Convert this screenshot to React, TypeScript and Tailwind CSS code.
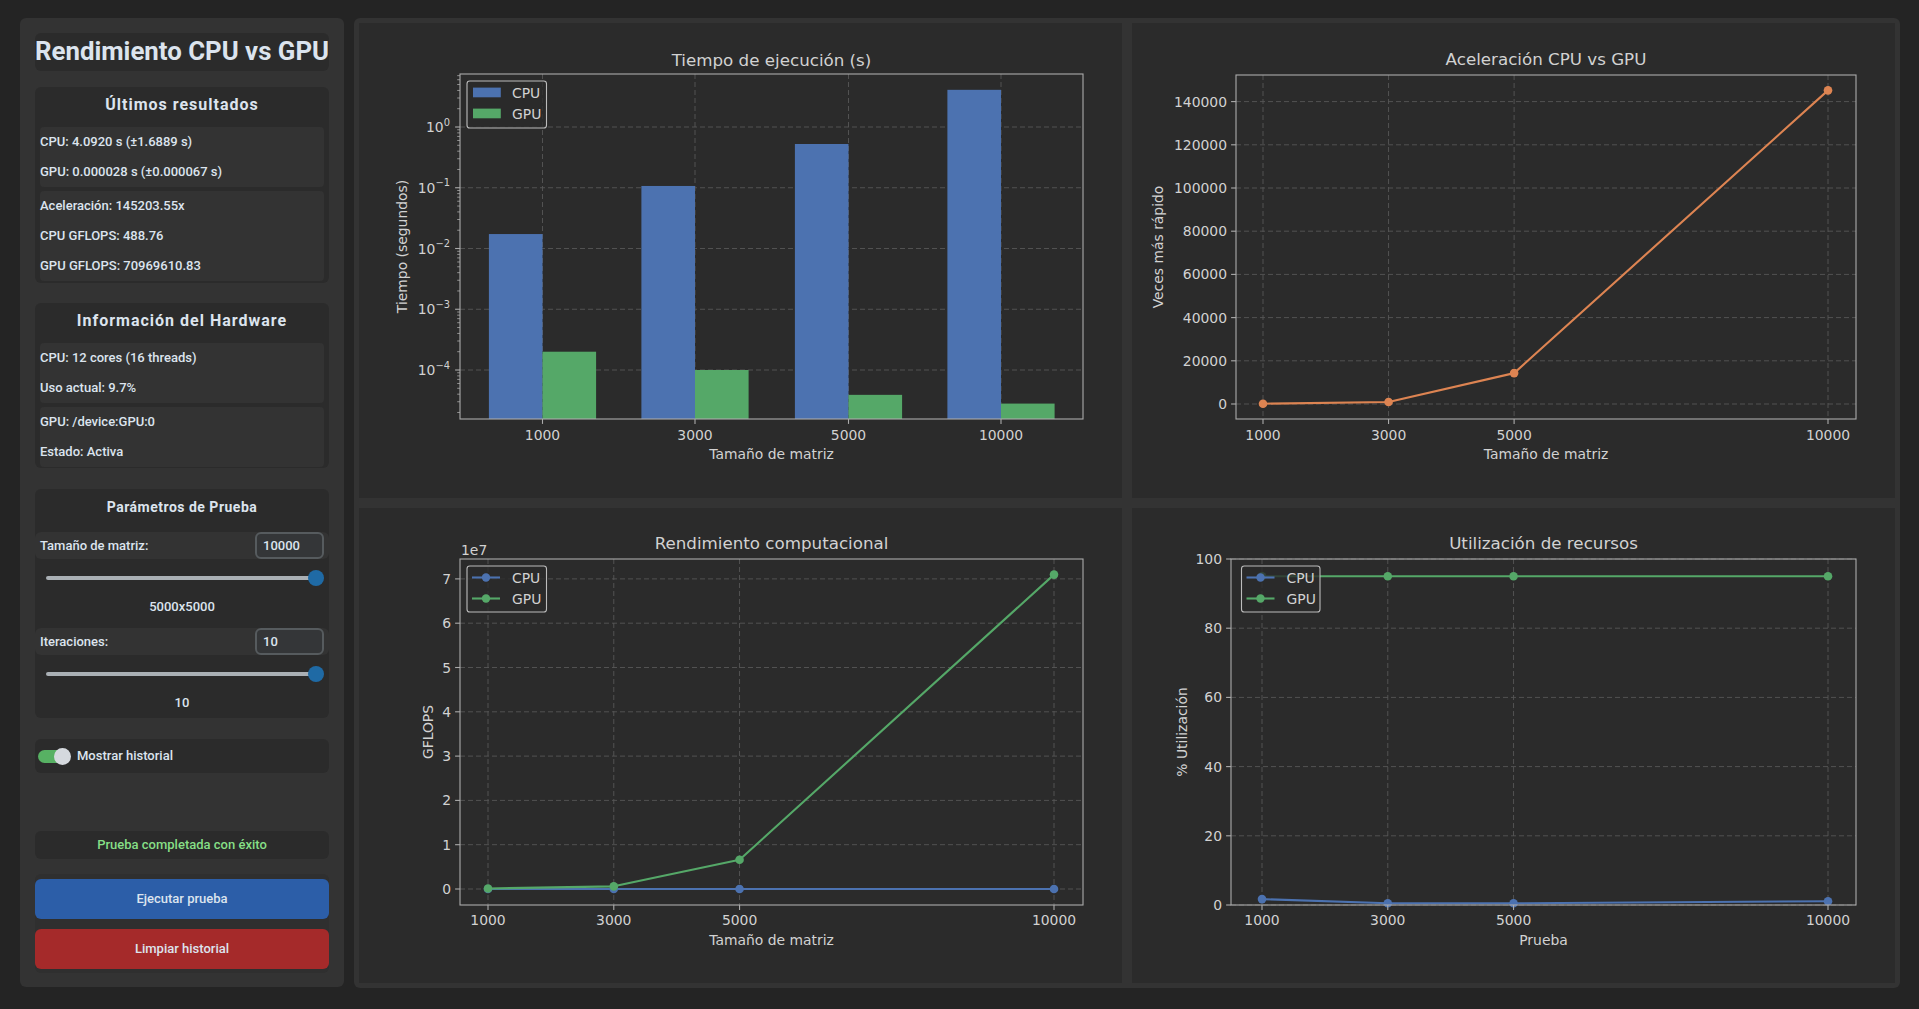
import React from 'react';

const FONT = "'DejaVu Sans', 'Liberation Sans', sans-serif";
const FG = '#d2d2d2';
const SPINE = '#ababab';
const GRID = '#575757';
const BLUE = '#4c72b0';
const GREEN = '#55a868';
const ORANGE = '#dd8452';

type Axes = { l: number; r: number; t: number; b: number };
type Item = { label: string; color: string };

const SIZES = [1000, 3000, 5000, 10000];
const lin = (p0: number, p1: number) => (v: number) => p0 + ((v - 1000) * (p1 - p0)) / 9000;

function Frame({ children }: { children: React.ReactNode }) {
  return (
    <div className="bg-[#2b2b2b] overflow-hidden">
      <svg viewBox="0 0 763 475" className="block w-full h-full" fontFamily={FONT}>
        {children}
      </svg>
    </div>
  );
}

function Grid({ a, xs, ys }: { a: Axes; xs: number[]; ys: number[] }) {
  return (
    <g stroke={GRID} strokeWidth={0.9} strokeDasharray="5 3">
      {ys.map((y) => (
        <line key={'h' + y} x1={a.l} x2={a.r} y1={y} y2={y} />
      ))}
      {xs.map((x) => (
        <line key={'v' + x} x1={x} x2={x} y1={a.t} y2={a.b} />
      ))}
    </g>
  );
}

function Spines({ a, xs, ys }: { a: Axes; xs: number[]; ys: number[] }) {
  return (
    <g stroke={SPINE} strokeWidth={1.1}>
      <rect x={a.l} y={a.t} width={a.r - a.l} height={a.b - a.t} fill="none" />
      {ys.map((y) => (
        <line key={'yt' + y} x1={a.l - 4.9} x2={a.l} y1={y} y2={y} />
      ))}
      {xs.map((x) => (
        <line key={'xt' + x} x1={x} x2={x} y1={a.b} y2={a.b + 4.9} />
      ))}
    </g>
  );
}

function XLabels({ xs, labels, y = 417 }: { xs: number[]; labels: string[]; y?: number }) {
  return (
    <g fontSize={13.9} fill={FG} textAnchor="middle">
      {xs.map((x, i) => (
        <text key={i} x={x} y={y}>
          {labels[i]}
        </text>
      ))}
    </g>
  );
}

function YLabels({ a, ys, labels }: { a: Axes; ys: number[]; labels: string[] }) {
  return (
    <g fontSize={13.9} fill={FG} textAnchor="end">
      {ys.map((y, i) => (
        <text key={i} x={a.l - 9} y={y + 5}>
          {labels[i]}
        </text>
      ))}
    </g>
  );
}

function Titles({ a, title, xlabel, ylabel, yx, ty }: { a: Axes; title: string; xlabel: string; ylabel: string; yx: number; ty: number }) {
  const cx = (a.l + a.r) / 2;
  const cy = (a.t + a.b) / 2;
  return (
    <g fill={FG}>
      <text x={cx} y={ty} fontSize={16.7} textAnchor="middle">
        {title}
      </text>
      <text x={cx} y={a.b + 40} fontSize={13.9} textAnchor="middle">
        {xlabel}
      </text>
      <text transform={`translate(${yx},${cy}) rotate(-90)`} fontSize={13.9} textAnchor="middle" dominantBaseline="central">
        {ylabel}
      </text>
    </g>
  );
}

function Legend({ x, y, w, h, kind, items }: { x: number; y: number; w: number; h: number; kind: 'bar' | 'line'; items: Item[] }) {
  return (
    <g>
      <rect x={x} y={y} width={w} height={h} rx={2.8} fill="#2b2b2b" fillOpacity={0.8} stroke="#bcbcbc" strokeWidth={1.1} />
      {items.map((it, i) => {
        const cy = y + 11.5 + i * 21;
        return (
          <g key={it.label}>
            {kind === 'bar' ? (
              <rect x={x + 6} y={cy - 4.9} width={27.8} height={9.7} fill={it.color} />
            ) : (
              <>
                <line x1={x + 5} x2={x + 33} y1={cy} y2={cy} stroke={it.color} strokeWidth={2.1} />
                <circle cx={x + 19} cy={cy} r={4.2} fill={it.color} />
              </>
            )}
            <text x={x + 45} y={cy + 5} fontSize={13.9} fill={FG}>
              {it.label}
            </text>
          </g>
        );
      })}
    </g>
  );
}

function Series({ pts, color }: { pts: [number, number][]; color: string }) {
  return (
    <g>
      <polyline points={pts.map((p) => p.join(',')).join(' ')} fill="none" stroke={color} strokeWidth={2.1} strokeLinejoin="round" />
      {pts.map(([x, y], i) => (
        <circle key={i} cx={x} cy={y} r={4.3} fill={color} />
      ))}
    </g>
  );
}

const CPU_GPU: Item[] = [
  { label: 'CPU', color: BLUE },
  { label: 'GPU', color: GREEN },
];

function TimeChart() {
  const a: Axes = { l: 101, r: 724, t: 51, b: 396 };
  const yLog = (v: number) => 104 - Math.log10(v) * 60.75;
  const centers = [183.5, 336, 489.5, 642];
  const cpu = [0.0173, 0.107, 0.525, 4.092];
  const gpu = [0.0002, 0.0001, 0.000039, 0.000028];
  const exps = [0, -1, -2, -3, -4];
  const majors = exps.map((e) => yLog(Math.pow(10, e)));
  const minors: number[] = [];
  for (let d = -5; d <= 0; d++) {
    for (let k = 2; k <= 9; k++) {
      const y = yLog(k * Math.pow(10, d));
      if (y >= a.t && y <= a.b) minors.push(y);
    }
  }
  const w = 53.6;
  return (
    <Frame>
      <Grid a={a} xs={centers} ys={majors} />
      {centers.map((c, i) => (
        <g key={i}>
          <rect x={c - w} y={yLog(cpu[i])} width={w} height={a.b - yLog(cpu[i])} fill={BLUE} />
          <rect x={c} y={yLog(gpu[i])} width={w} height={a.b - yLog(gpu[i])} fill={GREEN} />
        </g>
      ))}
      <Spines a={a} xs={centers} ys={majors} />
      <g stroke={SPINE} strokeWidth={0.8}>
        {minors.map((y, i) => (
          <line key={i} x1={a.l - 2.8} x2={a.l} y1={y} y2={y} />
        ))}
      </g>
      <g fill={FG} textAnchor="end">
        {exps.map((e, i) => (
          <text key={e} x={a.l - 10} y={majors[i] + 5} fontSize={13.9}>
            10
            <tspan dy={-6.5} fontSize={9.9}>
              {e === 0 ? '0' : '\u2212' + Math.abs(e)}
            </tspan>
          </text>
        ))}
      </g>
      <XLabels xs={centers} labels={['1000', '3000', '5000', '10000']} />
      <Legend x={108} y={58} w={79.5} h={47} kind="bar" items={CPU_GPU} />
      <Titles a={a} title="Tiempo de ejecución (s)" xlabel="Tamaño de matriz" ylabel="Tiempo (segundos)" yx={43} ty={42.5} />
    </Frame>
  );
}

function SpeedupChart() {
  const a: Axes = { l: 104, r: 724, t: 52, b: 396 };
  const X = lin(131, 696);
  const Y = (v: number) => 381 - (v / 20000) * 43.2;
  const ticks = [0, 20000, 40000, 60000, 80000, 100000, 120000, 140000];
  const xs = SIZES.map(X);
  const ys = ticks.map(Y);
  const data = [150, 950, 14300, 145203.55];
  return (
    <Frame>
      <Grid a={a} xs={xs} ys={ys} />
      <Series pts={SIZES.map((s, i) => [X(s), Y(data[i])])} color={ORANGE} />
      <Spines a={a} xs={xs} ys={ys} />
      <YLabels a={a} ys={ys} labels={ticks.map(String)} />
      <XLabels xs={xs} labels={SIZES.map(String)} />
      <Titles a={a} title="Aceleración CPU vs GPU" xlabel="Tamaño de matriz" ylabel="Veces más rápido" yx={26} ty={42} />
    </Frame>
  );
}

function GflopsChart() {
  const a: Axes = { l: 101, r: 724, t: 51, b: 397 };
  const X = lin(129, 695);
  const Y = (v: number) => 381 - v * 44.3;
  const ticks = [0, 1, 2, 3, 4, 5, 6, 7];
  const xs = SIZES.map(X);
  const ys = ticks.map(Y);
  const gpu = [0.012, 0.06, 0.66, 7.097];
  const cpu = [0.00002, 0.00004, 0.00004, 0.00005];
  return (
    <Frame>
      <Grid a={a} xs={xs} ys={ys} />
      <Series pts={SIZES.map((s, i) => [X(s), Y(cpu[i])])} color={BLUE} />
      <Series pts={SIZES.map((s, i) => [X(s), Y(gpu[i])])} color={GREEN} />
      <Spines a={a} xs={xs} ys={ys} />
      <YLabels a={a} ys={ys} labels={ticks.map(String)} />
      <XLabels xs={xs} labels={SIZES.map(String)} />
      <text x={102} y={47} fontSize={13.9} fill={FG}>
        1e7
      </text>
      <Legend x={108} y={58} w={79.5} h={46} kind="line" items={CPU_GPU} />
      <Titles a={a} title="Rendimiento computacional" xlabel="Tamaño de matriz" ylabel="GFLOPS" yx={69} ty={40.5} />
    </Frame>
  );
}

function UsageChart() {
  const a: Axes = { l: 99, r: 724, t: 51, b: 397 };
  const X = lin(130, 696);
  const Y = (v: number) => 397 - v * 3.46;
  const ticks = [0, 20, 40, 60, 80, 100];
  const xs = SIZES.map(X);
  const ys = ticks.map(Y);
  const gpu = [95, 95, 95, 95];
  const cpu = [1.7, 0.5, 0.5, 1.1];
  return (
    <Frame>
      <Grid a={a} xs={xs} ys={ys} />
      <Series pts={SIZES.map((s, i) => [X(s), Y(cpu[i])])} color={BLUE} />
      <Series pts={SIZES.map((s, i) => [X(s), Y(gpu[i])])} color={GREEN} />
      <Spines a={a} xs={xs} ys={ys} />
      <YLabels a={a} ys={ys} labels={ticks.map(String)} />
      <XLabels xs={xs} labels={SIZES.map(String)} />
      <Legend x={109.5} y={58} w={78.5} h={46} kind="line" items={CPU_GPU} />
      <Titles a={a} title="Utilización de recursos" xlabel="Prueba" ylabel="% Utilización" yx={50} ty={41} />
    </Frame>
  );
}

function Row({ children }: { children: React.ReactNode }) {
  return <div className="h-[30px] flex items-center text-[13px] font-medium">{children}</div>;
}

function Block({ lines }: { lines: string[] }) {
  return (
    <div className="mt-1 bg-[#333333] rounded-[4px]">
      {lines.map((l) => (
        <Row key={l}>{l}</Row>
      ))}
    </div>
  );
}

function Param({ label, value, shown }: { label: string; value: string; shown: string }) {
  return (
    <>
      <div className="h-[27px] bg-[#333333] rounded-[6px] flex items-center justify-between pl-[5px] pr-[5px]">
        <span className="text-[13px] font-medium">{label}</span>
        <input
          readOnly
          defaultValue={value}
          className="w-[69px] h-[27px] bg-[#343638] border-2 border-[#565b5e] rounded-[6px] pl-[6px] text-[13px] font-medium text-[#dce4ee] outline-none"
        />
      </div>
      <div className="h-[38px] flex items-center ml-[11px] mr-[5px]">
        <div className="relative w-full h-4 flex items-center">
          <div className="w-[calc(100%-8px)] h-[4px] rounded-full bg-[#aab0b5]" />
          <div className="absolute right-0 top-0 w-4 h-4 rounded-full bg-[#1f6aa5]" />
        </div>
      </div>
      <div className="h-[18px] pt-[2px] flex items-center justify-center text-[13px] font-medium">{shown}</div>
    </>
  );
}

function Sidebar() {
  return (
    <div className="w-[324px] h-[969px] shrink-0 bg-[#333333] rounded-[6px] px-[15px] pt-[15px] flex flex-col">
      <div className="h-[38px] rounded-[6px] bg-[#2b2b2b] flex items-center justify-center">
        <h1 className="text-[25.8px] font-bold whitespace-nowrap leading-none">Rendimiento CPU vs GPU</h1>
      </div>

      <div className="mt-4 rounded-[6px] bg-[#2b2b2b] px-[5px] pb-[2px]">
        <div className="h-[36px] flex items-center justify-center text-[16px] font-bold tracking-[1px]">Últimos resultados</div>
        <Block lines={['CPU: 4.0920 s (±1.6889 s)', 'GPU: 0.000028 s (±0.000067 s)']} />
        <Block lines={['Aceleración: 145203.55x', 'CPU GFLOPS: 488.76', 'GPU GFLOPS: 70969610.83']} />
      </div>

      <div className="mt-5 rounded-[6px] bg-[#2b2b2b] px-[5px] pb-[1px]">
        <div className="h-[36px] flex items-center justify-center text-[16px] font-bold tracking-[1px]">Información del Hardware</div>
        <Block lines={['CPU: 12 cores (16 threads)', 'Uso actual: 9.7%']} />
        <Block lines={['GPU: /device:GPU:0', 'Estado: Activa']} />
      </div>

      <div className="mt-[21px] rounded-[6px] bg-[#2b2b2b] pb-[7px]">
        <div className="h-[36px] flex items-center justify-center text-[14px] font-bold tracking-[0.5px]">Parámetros de Prueba</div>
        <div className="mt-[7px]">
          <Param label="Tamaño de matriz:" value="10000" shown="5000x5000" />
        </div>
        <div className="mt-[13px]">
          <Param label="Iteraciones:" value="10" shown="10" />
        </div>
      </div>

      <div className="mt-[21px] h-[34px] rounded-[6px] bg-[#2b2b2b] flex items-center pl-[3px]">
        <div className="relative w-[33px] h-[17px]">
          <div className="absolute left-0 top-[2px] w-[28px] h-[13px] rounded-full bg-[#57b163]" />
          <div className="absolute right-0 top-0 w-[17px] h-[17px] rounded-full bg-[#d5d9de]" />
        </div>
        <span className="ml-[6px] text-[13px] font-medium">Mostrar historial</span>
      </div>

      <div className="mt-[58px] h-[28px] rounded-[6px] bg-[#2b2b2b] flex items-center justify-center text-[13px] font-medium text-[#86df86]">
        Prueba completada con éxito
      </div>

      <div className="mt-[15px] rounded-[6px] bg-[#2f2f2f] pt-[5px] pb-[4px] flex flex-col gap-[10px]">
        <button className="h-[40px] rounded-[6px] bg-[#2c5ea8] text-[13px] font-medium">Ejecutar prueba</button>
        <button className="h-[40px] rounded-[6px] bg-[#a52a2a] text-[13px] font-medium">Limpiar historial</button>
      </div>
    </div>
  );
}

export default function App() {
  return (
    <div className="w-[1919px] h-[1009px] bg-[#242424] pl-5 pr-[19px] pt-[18px] flex gap-[10px] text-[#dce4ee] font-['Roboto','Noto_Sans',sans-serif] overflow-hidden">
      <Sidebar />
      <div className="flex-1 h-[970px] bg-[#333333] rounded-[6px] p-[5px] grid grid-cols-2 grid-rows-2 gap-[10px]">
        <TimeChart />
        <SpeedupChart />
        <GflopsChart />
        <UsageChart />
      </div>
    </div>
  );
}
